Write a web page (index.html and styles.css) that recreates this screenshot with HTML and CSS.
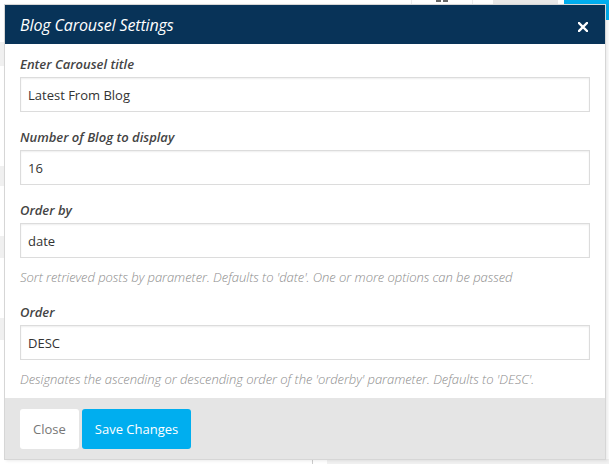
FILE: index.html
```html
<!DOCTYPE html>
<html>
<head>
<meta charset="utf-8">
<title>Blog Carousel Settings</title>
<link rel="stylesheet" href="styles.css">
</head>
<body>
<div class="page">
  <div class="topbar">
    <div class="tb-fill"></div>
    <div class="tb-cell"><span class="tb-icon"></span><span class="tb-icon"></span></div>
    <div class="tb-gray"></div>
    <div class="tb-blue"></div>
  </div>
  <div class="content">
    <div class="side">
      <div class="band b1"></div>
      <div class="band b2"></div>
      <div class="band b3"></div>
      <div class="band b4"></div>
      <div class="band b5"></div>
    </div>
  </div>
  <div class="bottombar">
    <div class="bb-white"></div>
    <div class="bb-cell"></div>
    <div class="bb-gray"></div>
  </div>
</div>

<div class="modal">
  <div class="modal-header">
    <h4 class="modal-title">Blog Carousel Settings</h4>
    <button class="modal-close" type="button" aria-label="Close">
      <svg width="10" height="10" viewBox="0 0 10 10"><path d="M1 1L9 9M9 1L1 9" stroke="#fff" stroke-width="2.4" stroke-linecap="square" fill="none"/></svg>
    </button>
  </div>
  <div class="modal-body">
    <div class="form-group">
      <label class="field-label">Enter Carousel title</label>
      <input class="field-input" type="text" value="Latest From Blog">
    </div>
    <div class="form-group">
      <label class="field-label">Number of Blog to display</label>
      <input class="field-input" type="text" value="16">
    </div>
    <div class="form-group">
      <label class="field-label">Order by</label>
      <input class="field-input" type="text" value="date">
      <p class="help">Sort retrieved posts by parameter. Defaults to 'date'. One or more options can be passed</p>
    </div>
    <div class="form-group">
      <label class="field-label">Order</label>
      <input class="field-input" type="text" value="DESC">
      <p class="help">Designates the ascending or descending order of the 'orderby' parameter. Defaults to 'DESC'.</p>
    </div>
  </div>
  <div class="modal-footer">
    <button class="btn btn-default" type="button">Close</button>
    <button class="btn btn-primary" type="button">Save Changes</button>
  </div>
</div>
</body>
</html>
```
FILE: styles.css
```css
* { box-sizing: border-box; }
html, body { margin: 0; padding: 0; }
body {
  width: 609px;
  height: 464px;
  overflow: hidden;
  position: relative;
  font-family: "Open Sans", "DejaVu Sans", sans-serif;
  background: #fff;
}

/* page behind the modal */
.page { height: 464px; display: flex; flex-direction: column; }
.topbar { height: 20px; display: flex; }
.tb-fill { width: 411px; }
.tb-cell {
  width: 62px;
  border-left: 1px solid #ececec;
  border-right: 1px solid #ececec;
  display: flex;
  justify-content: center;
  gap: 2px;
}
.tb-icon { width: 5px; height: 2px; background: #666; }
.tb-gray { width: 65px; margin-left: 20px; background: #e8e8e8; }
.tb-blue { width: 45px; margin-left: 6px; background: #00aeef; }
.content { flex: 1; display: flex; }
.side { width: 4px; display: flex; flex-direction: column; }
.band { background: #f0f0f0; }
.b1 { height: 22px; background: #fff; }
.b2 { height: 24px; }
.b3 { height: 20px; margin-top: 100px; }
.b4 { height: 22px; margin-top: 50px; }
.b5 { height: 22px; margin-top: 60px; }
.bottombar { height: 5px; display: flex; }
.bb-white { width: 312px; background: #fff; }
.bb-cell { width: 15px; border-left: 1px solid #ccc; background: #fff; }
.bb-gray { flex: 1; background: #f1f1f1; }

/* modal */
.modal {
  position: absolute;
  left: 4px;
  top: 4px;
  width: 602px;
  border: 1px solid #d6d6d6;
  background: #fff;
  box-shadow: 2px 1px 3px rgba(0, 0, 0, 0.08);
}
.modal-header {
  height: 39px;
  background: #083358;
  display: flex;
  align-items: center;
  justify-content: space-between;
  padding: 0 15px;
}
.modal-title {
  margin: 0;
  font-size: 16px;
  font-style: italic;
  font-weight: 400;
  color: #fff;
  line-height: 20px;
  letter-spacing: -0.12px;
}
.modal-close {
  border: 0;
  background: transparent;
  padding: 0;
  width: 10px;
  height: 10px;
  margin-right: 2px;
  margin-top: 5px;
  display: flex;
}
.modal-body { padding: 11px 15px 9px; }
.form-group { margin-bottom: 16px; }
.form-group:last-child { margin-bottom: 0; }
.field-label {
  display: block;
  font-size: 13px;
  font-weight: 600;
  font-style: italic;
  color: #444;
  line-height: 19px;
  margin-bottom: 3px;
}
.field-input {
  display: block;
  width: 100%;
  height: 35px;
  border: 1px solid #dcdcdc;
  box-shadow: inset 0 1px 2px rgba(0, 0, 0, 0.07);
  padding: 0 7px;
  font-family: "Open Sans", "DejaVu Sans", sans-serif;
  font-size: 13px;
  color: #333;
  background: #fff;
  outline: none;
}
.help {
  margin: 9px 0 0;
  font-size: 13px;
  font-style: italic;
  font-weight: 300;
  color: #8c8c8c;
  line-height: 20px;
  white-space: nowrap;
  letter-spacing: -0.05px;
}
.modal-footer {
  height: 61px;
  background: #e5e5e5;
  padding: 11px 15px 10px;
  display: flex;
  gap: 3px;
}
.btn {
  height: 40px;
  border: 0;
  border-radius: 3px;
  font-family: "Open Sans", "DejaVu Sans", sans-serif;
  font-size: 13px;
  padding: 0 13px;
  white-space: nowrap;
}
.btn-default { background: #fff; color: #777; }
.btn-primary { background: #00aeef; color: #fff; }
```
